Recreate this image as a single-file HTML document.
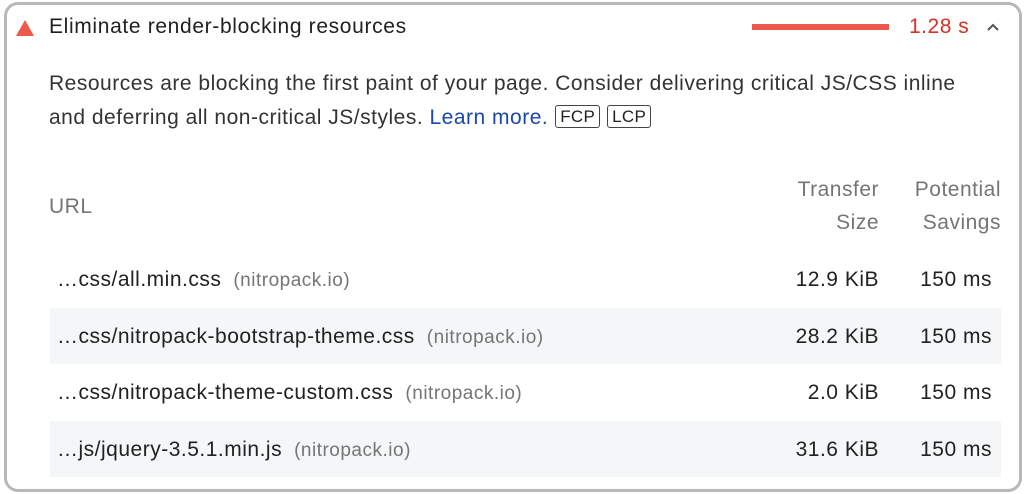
<!DOCTYPE html>
<html><head><style>
body{margin:0;width:1024px;height:494px;background:#fff;font-family:"Liberation Sans",sans-serif;overflow:hidden;position:relative;letter-spacing:0.5px}
.card{position:absolute;left:4px;top:2px;width:1012px;height:484px;border:3px solid #b8b8b8;border-radius:14px}
.t{position:absolute;white-space:nowrap}
.row{position:absolute;left:50px;width:951px;height:56px}
.row.s{background:#f5f6f8}
.row span{position:absolute;top:17px;font-size:21px;color:#212121;white-space:nowrap}
.row .u{left:7px}
.row .h{position:static;color:#757575;font-size:19px;margin-left:12px;letter-spacing:0.5px}
.tag{display:inline-block;border:1px solid #444;border-radius:3px;font-size:17px;padding:1px 4px;line-height:19px;vertical-align:2px;color:#212121;margin-left:7px;letter-spacing:0.3px}
</style></head><body>
<div class="card"></div>
<svg class="t" style="left:16px;top:20px" width="18" height="16"><polygon points="9,0 18,16 0,16" fill="#eb5a4a"/></svg>
<div class="t" style="left:49px;top:15px;font-size:21px;color:#212121;letter-spacing:0.65px">Eliminate render-blocking resources</div>
<div class="t" style="left:752px;top:24px;width:137px;height:6px;background:#eb5a4a"></div>
<div class="t" style="left:909px;top:15px;font-size:21px;color:#d93025">1.28 s</div>
<svg class="t" style="left:986px;top:22px" width="14" height="10"><path d="M2 8 L7 3 L12 8" stroke="#555" stroke-width="2" fill="none"/></svg>
<div class="t" style="left:49px;top:67px;font-size:21px;color:#333;line-height:34px">Resources are blocking the first paint of your page. Consider delivering critical JS/CSS inline<br>and deferring all non-critical JS/styles. <span style="color:#1a47a8">Learn more.</span><span class="tag">FCP</span><span class="tag">LCP</span></div>
<div class="t" style="left:49px;top:195px;font-size:21px;color:#757575">URL</div>
<div class="t" style="left:760px;top:173px;font-size:21px;color:#757575;text-align:right;width:119px;line-height:33px">Transfer<br>Size</div>
<div class="t" style="left:880px;top:173px;font-size:21px;color:#757575;text-align:right;width:121px;line-height:33px">Potential<br>Savings</div>
<div class="row" style="top:251px"><span class="u">…css/all.min.css<span class="h">(nitropack.io)</span></span><span style="right:122px">12.9 KiB</span><span style="right:9px">150 ms</span></div>
<div class="row s" style="top:308px"><span class="u">…css/nitropack-bootstrap-theme.css<span class="h">(nitropack.io)</span></span><span style="right:122px">28.2 KiB</span><span style="right:9px">150 ms</span></div>
<div class="row" style="top:364px"><span class="u">…css/nitropack-theme-custom.css<span class="h">(nitropack.io)</span></span><span style="right:122px">2.0 KiB</span><span style="right:9px">150 ms</span></div>
<div class="row s" style="top:421px"><span class="u">…js/jquery-3.5.1.min.js<span class="h">(nitropack.io)</span></span><span style="right:122px">31.6 KiB</span><span style="right:9px">150 ms</span></div>
</body></html>
